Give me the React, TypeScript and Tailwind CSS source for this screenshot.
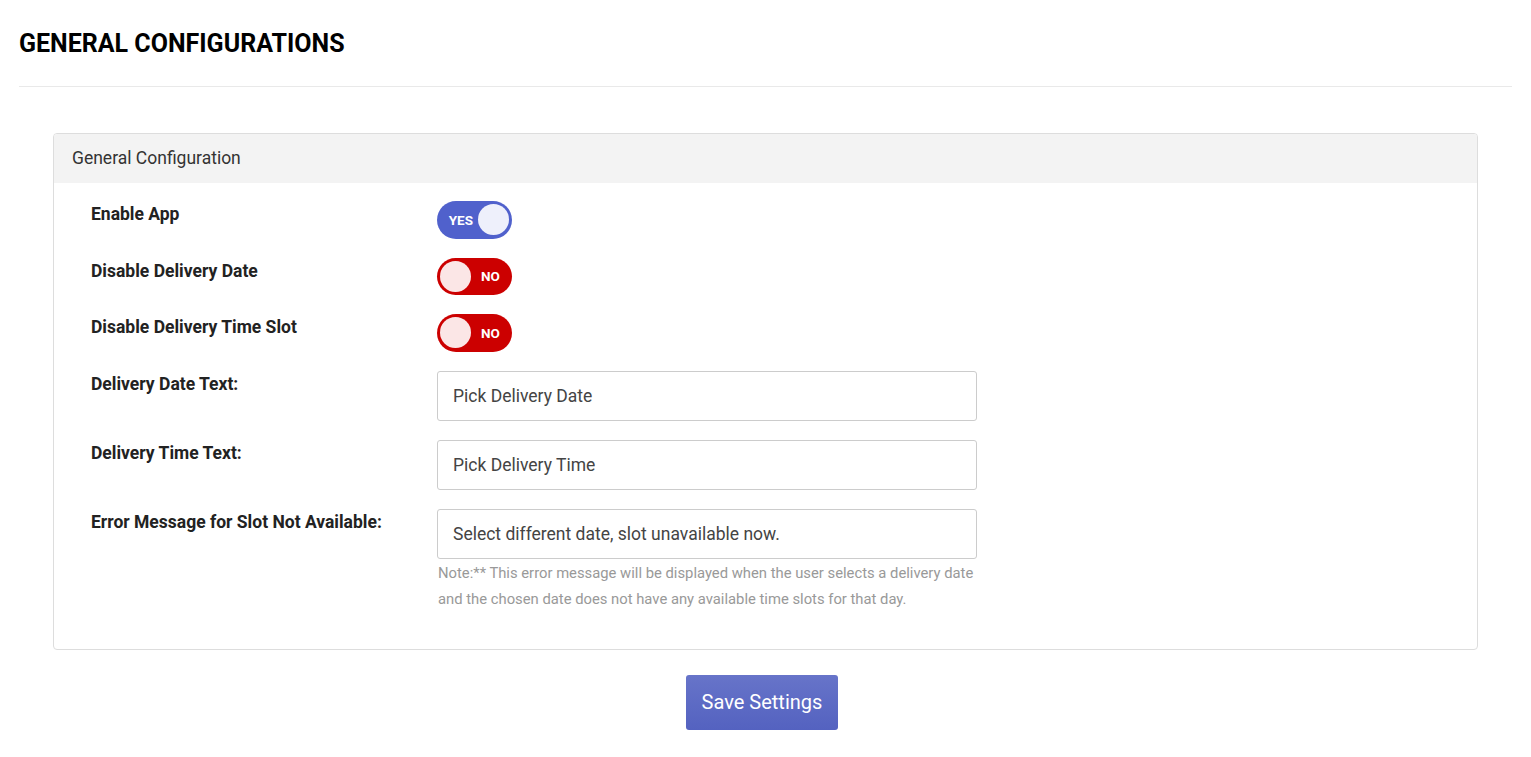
import { useState } from 'react';

interface ToggleProps {
  on: boolean;
  onChange: (v: boolean) => void;
}

function Toggle({ on, onChange }: ToggleProps) {
  return (
    <button
      type="button"
      onClick={() => onChange(!on)}
      className={`relative flex h-[37.5px] w-[75px] items-center rounded-full px-[3px] ${
        on ? 'bg-[#5061cc] justify-end' : 'bg-[#cc0000] justify-start'
      }`}
    >
      {on ? (
        <>
          <span className="mr-[5px] text-[13.5px] font-bold text-white">YES</span>
          <span className="h-[31px] w-[31px] rounded-full bg-[#eef0fb]" />
        </>
      ) : (
        <>
          <span className="h-[31px] w-[31px] rounded-full bg-[#fbe6e6]" />
          <span className="ml-[10px] text-[13.5px] font-bold text-white">NO</span>
        </>
      )}
    </button>
  );
}

function Row({ label, children }: { label: string; children: React.ReactNode }) {
  return (
    <div className="flex">
      <div className="w-[346px] shrink-0 pt-[1px] text-[17.5px] font-bold leading-[24px] text-[#222]">
        {label}
      </div>
      <div>{children}</div>
    </div>
  );
}

export default function App() {
  const [enabled, setEnabled] = useState(true);
  const [noDate, setNoDate] = useState(false);
  const [noSlot, setNoSlot] = useState(false);
  const [dateText, setDateText] = useState('Pick Delivery Date');
  const [timeText, setTimeText] = useState('Pick Delivery Time');
  const [errorText, setErrorText] = useState('Select different date, slot unavailable now.');

  const inputCls =
    'h-[50px] w-[540px] rounded-[3px] border border-[#ccc] bg-white px-[15px] text-[17.5px] text-[#444] outline-none';

  return (
    <div className="min-h-screen bg-white px-[19px] font-['Roboto',sans-serif]">
      <h1 className="pt-[29px] pb-[27px] text-[25px] font-bold leading-[30px] text-black">
        GENERAL CONFIGURATIONS
      </h1>
      <div className="h-px bg-[#e9e9e9]" />

      <div className="px-[34px] pt-[46px]">
        <div className="overflow-hidden rounded-[4px] border border-[#ddd]">
          <div className="h-[49px] bg-[#f3f3f3] px-[18px] text-[17.5px] leading-[49px] text-[#333]">
            General Configuration
          </div>
          <div className="flex flex-col gap-[19px] px-[37px] pt-[18px] pb-[37px]">
            <Row label="Enable App">
              <Toggle on={enabled} onChange={setEnabled} />
            </Row>
            <Row label="Disable Delivery Date">
              <Toggle on={noDate} onChange={setNoDate} />
            </Row>
            <Row label="Disable Delivery Time Slot">
              <Toggle on={noSlot} onChange={setNoSlot} />
            </Row>
            <Row label="Delivery Date Text:">
              <input className={inputCls} value={dateText} onChange={(e) => setDateText(e.target.value)} />
            </Row>
            <Row label="Delivery Time Text:">
              <input className={inputCls} value={timeText} onChange={(e) => setTimeText(e.target.value)} />
            </Row>
            <Row label="Error Message for Slot Not Available:">
              <input className={inputCls} value={errorText} onChange={(e) => setErrorText(e.target.value)} />
              <p className="mt-[1px] w-[540px] pl-[1px] text-[14.8px] leading-[26px] text-[#999]">
                Note:** This error message will be displayed when the user selects a delivery date and the chosen
                date does not have any available time slots for that day.
              </p>
            </Row>
          </div>
        </div>

        <div className="flex justify-center pt-[25px] pr-[7px]">
          <button
            type="button"
            className="h-[55px] w-[152px] rounded-[3px] bg-gradient-to-b from-[#6774c9] to-[#5462c0] text-[20px] text-white"
          >
            Save Settings
          </button>
        </div>
      </div>
    </div>
  );
}
